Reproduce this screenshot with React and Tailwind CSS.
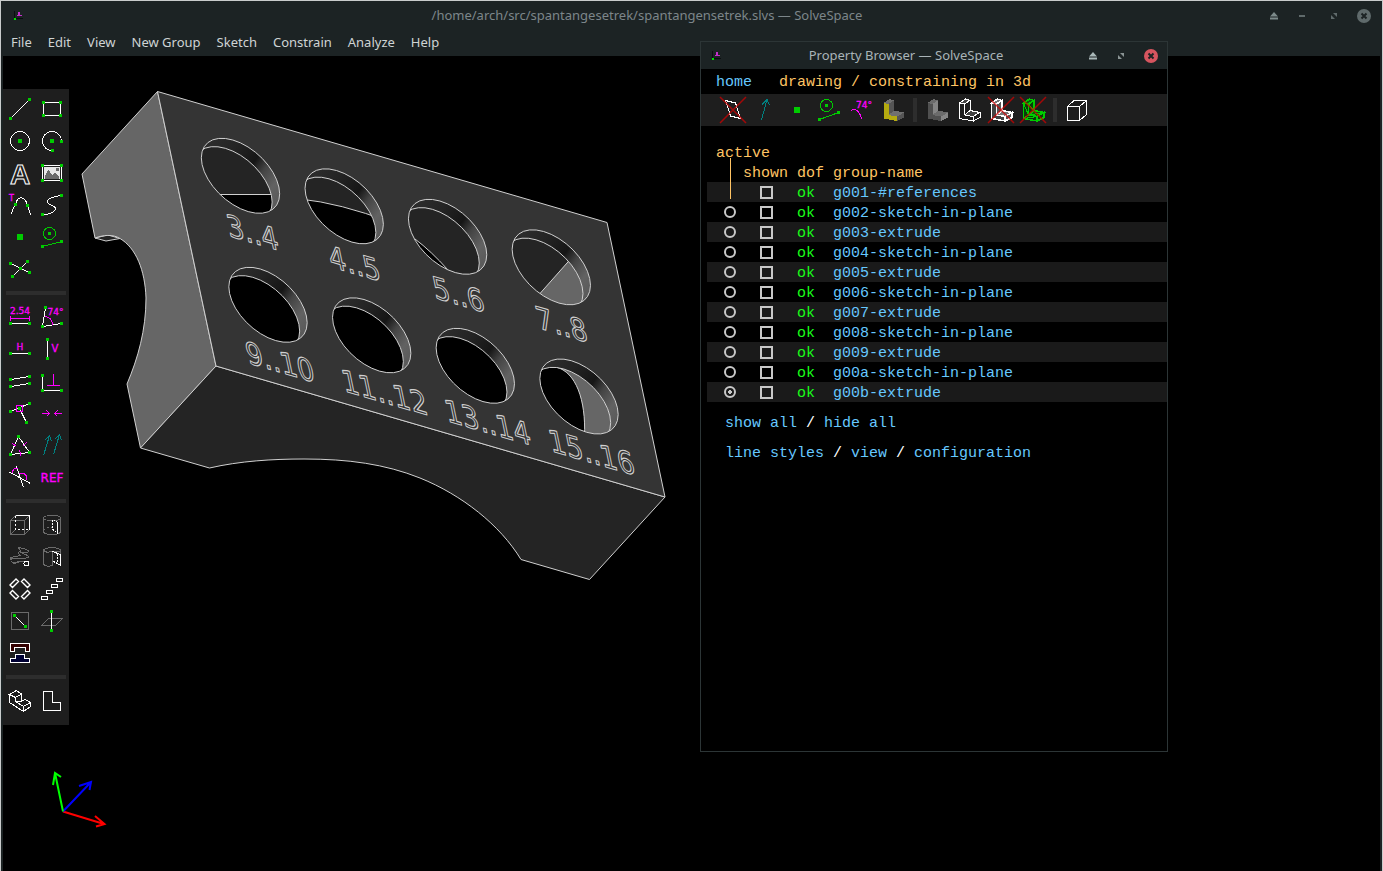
import { useState } from 'react';

const W = '#ffffff';
const G = '#00cc00';
const M = '#ff00ff';
const T = '#008080';
const D = '#6b6b6b';

const LABEL_FONT = '"DejaVu Sans", sans-serif';

function Icon({ children }) {
    return (
        <svg width="24" height="24" viewBox="0 0 24 24" fill="none" stroke={W} shapeRendering="crispEdges" className="block overflow-visible" aria-hidden="true">
            {children}
        </svg>
    );
}

// Green handles at the given points
function Dots({ at, r = 1.5 }) {
    return at.map(([x, y]) => (
        <rect key={`${x}-${y}`} x={x - r} y={y - r} width={r * 2} height={r * 2} fill={G} stroke="none" />
    ));
}

function Label({ x, y, size, children }) {
    return (
        <text x={x} y={y} fontSize={size} textAnchor="middle" fill={M} stroke={M} strokeWidth="0.3" fontFamily={LABEL_FONT}>
            {children}
        </text>
    );
}

function BracketSolid({ front, side, top, stroke, width = 1 }) {
    return (
        <g stroke={stroke || 'none'} strokeWidth={width}>
            <path d="M2.5 5L8.5 1L13 2.5L7.5 6Z" fill={top} />
            <path d="M7.5 6L13 2.5V13L7.5 17Z" fill={side} />
            <path d="M7.5 17L13 12.5L23 14.5L16 18.5Z" fill={top} />
            <path d="M2.5 5L7.5 6V17L16 18.5V23L2.5 20.5Z" fill={front} />
            <path d="M16 18.5L23 14.5V19.5L16 23Z" fill={side} />
        </g>
    );
}

function RedCross() {
    return <path d="M-1 -1L25 25M25 -1L-1 25" stroke="#d00000" strokeOpacity="0.75" strokeWidth="1.5" shapeRendering="auto" />;
}

const sketchTools = [
    ['Line segment', <><path d="M2.5 21.5L21.5 2.5" /><Dots at={[[2.5, 21.5], [21.5, 2.5]]} /></>],
    ['Rectangle', <><path d="M3.5 5.5H20.5V18.5H3.5Z" /><Dots at={[[3.5, 5.5], [20.5, 5.5], [3.5, 18.5], [20.5, 18.5]]} /></>],
    ['Circle', <><circle cx="12" cy="12" r="9.5" /><Dots at={[[12, 12]]} r={2} /></>],
    ['Arc', <><path d="M21.5 12A9.5 9.5 0 1 0 12.5 21.5" /><Dots at={[[12, 12]]} r={2} /><Dots at={[[21.5, 12.5], [12.5, 21.5]]} /></>],
    ['Text', <text x="12" y="22.5" fontSize="28" textAnchor="middle" fontFamily='"Liberation Sans", sans-serif' fontWeight="bold">A</text>],
    ['Image', <>
        <path d="M2.5 4.5H21.5V19.5H2.5Z" />
        <path d="M4 6H20V18H4Z" fill="#e8e8e8" stroke="none" />
        <path d="M5 17.5V15L8.5 8.5L12 14L15 11L19 15.5V17.5Z" fill={D} stroke="none" />
        <path d="M16 7H19V10H16Z" fill={D} stroke="none" />
        <Dots at={[[2.5, 4.5], [21.5, 4.5], [2.5, 19.5], [21.5, 19.5]]} />
    </>],
    ['Tangent arc', <><path d="M3.5 21C5 16 6 13 7.5 11C10 2.5 17 2.5 19.5 12.5C21 16 22 19 22.5 22.5" /><Dots at={[[7.5, 11.5], [19.5, 12.5]]} /><Label x={3.5} y={8} size={8}>T</Label></>],
    ['Bezier spline', <><path d="M21.5 2.5C14 3 6.5 6 7.5 9.5C9 12.5 15 12 15.5 15.5C15.5 18.5 10 21.5 2.5 21.5" /><Dots at={[[21.5, 2.5], [2.5, 21.5]]} /></>],
    ['Point', <Dots at={[[12, 12]]} r={3} />],
    ['Construction', <><circle cx="9.5" cy="8.5" r="6" stroke={G} /><path d="M2.5 21.5L21.5 16.5" stroke={G} /><Dots at={[[9.5, 8.5], [2.5, 21.5], [21.5, 16.5]]} /></>],
    ['Split curves', <><path d="M2.5 6.5L21.5 15.5M19.5 4.5L4.5 19.5" /><Dots at={[[2.5, 6.5], [21.5, 15.5], [19.5, 4.5], [4.5, 19.5], [12.5, 11.5]]} /></>],
];

const constraintTools = [
    ['Distance', <><Label x={12} y={9} size={9}>2.54</Label><path d="M2.5 13.5H21.5M2.5 11V16M21.5 11V16" stroke={M} /><path d="M2.5 18.5H21.5" /><Dots at={[[2.5, 18.5], [21.5, 18.5]]} /></>],
    ['Angle', <><path d="M5.5 2.5L2.5 21.5L21.5 18.5" /><path d="M4.5 11.5C9 11.5 12.5 14.5 12.5 19.5" stroke={M} /><Dots at={[[5.5, 2.5], [2.5, 21.5], [21.5, 18.5]]} /><Label x={15.5} y={9.5} size={9}>74°</Label></>],
    ['Horizontal', <><Label x={12} y={13} size={9}>H</Label><path d="M2.5 16.5H21.5" /><Dots at={[[2.5, 16.5], [21.5, 16.5]]} /></>],
    ['Vertical', <><path d="M7.5 2.5V21.5" /><Dots at={[[7.5, 2.5], [7.5, 21.5]]} /><Label x={15} y={15} size={10}>V</Label></>],
    ['Parallel', <><path d="M2.5 10.5L21.5 7.5M2.5 17.5L21.5 14.5" /><Dots at={[[2.5, 10.5], [21.5, 7.5], [2.5, 17.5], [21.5, 14.5]]} /></>],
    ['Perpendicular', <><path d="M2.5 6.5V21.5H21.5" /><Dots at={[[2.5, 6.5], [2.5, 21.5], [21.5, 21.5]]} /><path d="M13.5 5V16.5M7 16.5H20" stroke={M} /></>],
    ['Point on curve', <><path d="M2.5 10.5L21.5 2.5M11.5 7.5L18.5 21.5" /><Dots at={[[2.5, 10.5], [21.5, 2.5], [18.5, 21.5], [11.5, 7.5]]} /><path d="M8.5 4.5H14.5V10.5H8.5Z" stroke={M} /></>],
    ['Symmetric', <path d="M2 12.5H10M6.5 9.5L9.5 12.5L6.5 15.5M22 12.5H14M17.5 9.5L14.5 12.5L17.5 15.5" stroke={M} />],
    ['Equal', <><path d="M10.5 3.5L2.5 21.5L21.5 19.5Z" /><path d="M4.5 10.5L8.5 13.5M14.5 13.5L18.5 9.5M11.5 17.5L13 22.5" stroke={M} /><Dots at={[[10.5, 3.5], [2.5, 21.5], [21.5, 19.5]]} /></>],
    ['Same orientation', <path d="M3.5 22.5L9.5 2.5M4.5 7.5L9.5 2.5L11.5 8.5M13.5 21.5L19.5 1.5M14.5 6.5L19.5 1.5L21.5 7.5" stroke={T} />],
    ['Other angle', <><path d="M1.5 7L22.5 18.5M8.5 1.5L15.5 22.5" /><path d="M4.5 8C4 5 7 2.5 9.5 4M11.5 9C15 6.5 20 10 18.5 15.5" stroke={M} /></>],
    ['Reference', <Label x={12} y={17} size={12}>REF</Label>],
];

const groupTools = [
    ['Extrude', <>
        <path d="M2.5 7.5H16.5V21.5H2.5ZM2.5 7.5L7.5 2.5M2.5 21.5L7.5 16.5M16.5 7.5L21.5 2.5M16.5 21.5L21.5 16.5" stroke={D} />
        <path d="M7.5 2.5H21.5V16.5" />
        <path d="M7.5 2.5V16.5H21.5" strokeDasharray="2 2" />
    </>],
    ['Lathe', <>
        <ellipse cx="12" cy="5" rx="8.5" ry="2.5" stroke={D} />
        <path d="M3.5 5V19C6 22.5 18 22.5 20.5 19V5" stroke={D} />
        <path d="M3.5 17C6 14.5 9 14.5 12 14.5" stroke={D} strokeDasharray="2 2" />
        <path d="M12.5 14.5V6.5L17.5 8.5M12.5 16L17.5 20.5" strokeDasharray="2 1" />
        <path d="M17.5 8.5V20.5" />
    </>],
    ['Helical', <>
        <path d="M10.5 2.5C14 3 19 4.5 20.5 6C20.500 8 16 8 12.5 7.500C16 9 20 10 21 12C19 14.5 8 12.5 4 13.5C1.5 15.5 3.5 18 7 17.5C11 16 14 15.5 17 16.5" stroke={D} />
        <path d="M10.5 2.5L12.500 6L10 8L12 10.500L2.5 12.5V15M5 18.5L11 17.500" stroke={D} />
        <circle cx="18.5" cy="18.5" r="2.5" />
    </>],
    ['Revolve', <>
        <path d="M3.5 5C6 2 18 2 20.5 5C22 7 15 7 12.5 6.5C8 7.5 4 7 3.5 5V19C5 21.5 9 21.5 12.5 20.5V7M20.5 5V9" stroke={D} />
        <path d="M12.5 6.5L20.5 9.5V20.5L17.5 18.5" />
        <path d="M17.5 9V18.5L12.5 16" strokeDasharray="2 1" />
    </>],
    ['Step rotating', <>
        <path d="M2 8L8 2L10.5 4.5L4.5 10.5ZM22 8L16 2L13.5 4.5L19.5 10.5ZM2 16L8 22L10.5 19.5L4.5 13.5ZM22 16L16 22L13.5 19.5L19.5 13.5Z" strokeWidth="1.4" shapeRendering="auto" />
    </>],
    ['Step translating', <path d="M16.5 1.5H22.5V4.5H16.5ZM11.5 7.5H17.5V10.5H11.5ZM6.5 13.5H12.5V16.5H6.5ZM1.5 19.5H7.5V22.5H1.5Z" />],
    ['Sketch in workplane', <><path d="M3.5 3.5H20.5V20.5H3.5Z" stroke={D} /><path d="M6.5 6.5L17.5 17.5" /><Dots at={[[6.5, 6.5], [17.5, 17.5]]} /></>],
    ['Sketch in 3d', <><path d="M1.5 16.5L8.5 9.5H22.5L15.5 16.5Z" stroke={D} /><path d="M11.5 2.5V21.5" /><Dots at={[[11.5, 2.5], [11.5, 21.5]]} /></>],
    ['Link assembly', <>
        <path d="M2.5 2.5H21.5V10.5H17.5V6.5H6.5V10.5H2.5Z" fill="#330000" />
        <path d="M7.5 13.5H16.5V17.5H21.5V21.5H2.5V17.5H7.5Z" fill="#000033" />
    </>],
];

const viewTools = [
    ['Nearest isometric', <>
        <path d="M1.5 5.5L8.5 1.5L13.5 5L7.5 8.5ZM1.5 5.5V13.5L15.5 22.5L22.5 17.5V13.5L17.5 10.5L13.5 12V5M7.5 8.5V12.5L15.5 17.5L22.5 13.5M15.5 17.5V22.5M7.5 12.5L13.5 12" />
    </>],
    ['Nearest orthographic', <path d="M3.5 2.5H12.5V13.5H20.5V21.5H3.5Z" />],
];

const showTools = [
    ['Workplanes', <><path d="M4.5 2.5L14.5 5L19.5 20.5L9.5 18Z" /><RedCross /></>],
    ['Normals', <path d="M8.5 22L14 1.5M9 6.5L14 1.5L16.5 7.5" stroke={T} />],
    ['Points', <Dots at={[[12, 12]]} r={3} />],
    ['Construction entities', <><circle cx="9.5" cy="7.5" r="6" stroke={G} /><path d="M2.5 21.5L21.5 14.5" stroke={G} /><Dots at={[[9.5, 7.5], [2.5, 21.5], [21.5, 14.5]]} /></>],
    ['Constraints', <><Label x={15} y={10} size={9}>74°</Label><path d="M2.5 12.5C5 10.5 8 12 9.5 14C11.5 17 12.5 19 12.5 21" stroke={M} /></>],
    ['Faces', <BracketSolid front="#b5ab10" side="#555555" top="#707070" />],
    null,
    ['Shaded solid', <BracketSolid front="#505050" side="#858585" top="#6b6b6b" />],
    ['Edges', <BracketSolid front="#1e1e1e" side="#1e1e1e" top="#444444" stroke={W} />],
    ['Outlines', <><BracketSolid front="#444444" side="#555555" top="#777777" stroke={W} width={1.5} /><RedCross /></>],
    ['Mesh', <>
        <BracketSolid front="#0a3a0a" side="#0a3a0a" top="#0a5a0a" stroke={G} width={1.5} />
        <path d="M2.5 5L7.5 17L2.5 20.5M7.5 6L13 13M7.5 17L23 14.5M16 18.5L2.5 20.5" stroke={G} />
        <RedCross />
    </>],
    null,
    ['Occluded lines', <path d="M2.5 8.5H14.5V22.5H2.5ZM2.5 8.5L9 2.5H21.5V16.5L14.5 22.5M14.5 8.5L21.5 2.5" />],
];

function ToolGrid({ tools }) {
    return (
        <div className="grid grid-cols-2 px-px">
            {tools.map(([name, art]) => (
                <button key={name} type="button" aria-label={name} className="p-1 hover:bg-white/10">
                    <Icon>{art}</Icon>
                </button>
            ))}
        </div>
    );
}

function Toolbar() {
    return (
        <aside className="relative mt-[33px] w-[66px] bg-[#1e1e1e] pt-1 pb-2">
            <ToolGrid tools={sketchTools} />
            <hr className="mx-[3px] my-1.5 h-1 border-0 bg-[#2d2d2d]" />
            <ToolGrid tools={constraintTools} />
            <hr className="mx-[3px] my-1.5 h-1 border-0 bg-[#2d2d2d]" />
            <ToolGrid tools={groupTools} />
            <hr className="mx-[3px] my-1.5 h-1 border-0 bg-[#2d2d2d]" />
            <ToolGrid tools={viewTools} />
        </aside>
    );
}

const BOTTOM = '#242424';
const LEFT = '#666666';
const EDGE = '#d0d0d0';

// Holes through the slanted face: centre, background and what is seen through them
const holes = [
    { x: 240.5, y: 175.8, fill: BOTTOM, art: <path d="M190 194.5H290V230H190Z" fill="#000" stroke={EDGE} /> },
    { x: 344.2, y: 206.3, fill: BOTTOM, art: <path d="M300 199Q340 203 390 222V260H300Z" fill="#000" stroke={EDGE} /> },
    { x: 447.6, y: 236.8, fill: BOTTOM, art: <path d="M415 239Q431 251 448 270L440 275L410 250Z" fill="#000" stroke={EDGE} /> },
    { x: 551.3, y: 267.3, fill: BOTTOM, art: <path d="M575 254L536 298L600 320V250Z" fill={LEFT} stroke={EDGE} /> },
    { x: 268, y: 304.8, fill: '#000' },
    { x: 371.7, y: 335.3, fill: '#000' },
    { x: 475.3, y: 365.8, fill: '#000' },
    { x: 579, y: 396.5, fill: '#000', art: <path d="M556 367C576 372 586 400 584.5 436H640V360Z" fill={LEFT} stroke={EDGE} /> },
];

const sizes = [
    [229, 236, '3..4'],
    [331, 267, '4..5'],
    [435, 298, '5..6'],
    [538, 328, '7..8'],
    [248, 363, '9..10'],
    [344, 391, '11..12'],
    [447, 421, '13..14'],
    [551, 451, '15..16'],
];

function Model() {
    return (
        <g stroke={EDGE} strokeLinejoin="round">
            <defs>
                <linearGradient id="wall" gradientUnits="userSpaceOnUse" x1="-36" y1="-24" x2="36" y2="28">
                    <stop offset="0" stopColor="#2c2c2c" />
                    <stop offset="0.25" stopColor="#242424" />
                    <stop offset="0.52" stopColor="#161616" />
                    <stop offset="0.66" stopColor="#444444" />
                    <stop offset="0.85" stopColor="#626262" />
                    <stop offset="1" stopColor="#5a5a5a" />
                </linearGradient>
                <clipPath id="rim">
                    <circle r="1" transform="matrix(38.4 11.2 7.7 35.8 0 0)" />
                </clipPath>
                <clipPath id="far">
                    <circle r="1" transform="matrix(38.4 11.2 7.7 35.8 -7.5 8.3)" />
                </clipPath>
            </defs>

            <path d="M95 238L106 241L120 238.5L108 235Z" fill={BOTTOM} />
            <path d="M157.5 91.5L82 174L95 238C103 235 113 234 120 238.5C136 248 145 270 146 298C146 330 138 358 127 384L140.5 448L216 366Z" fill={LEFT} />
            <path d="M216 366L665 497L589.5 579.5L521 559.5C500 525 462 495 420 478C385 464 348 459 304 459C272 459 240 461 209.5 468L140.5 448Z" fill={BOTTOM} />
            <path d="M157.5 91.5L607 222.5L665 497L216 366Z" fill="#343434" />

            {holes.map((h) => (
                <g key={`${h.x}`} transform={`translate(${h.x} ${h.y})`}>
                    <g clipPath="url(#rim)">
                        <path d="M-45 -45H45V45H-45Z" fill="url(#wall)" stroke="none" />
                        <g clipPath="url(#far)">
                            <path d="M-60 -60H60V60H-60Z" fill={h.fill} stroke="none" />
                            <g transform={`translate(${-h.x} ${-h.y})`}>{h.art}</g>
                        </g>
                        <circle r="1" transform="matrix(38.4 11.2 7.7 35.8 -7.5 8.3)" fill="none" vectorEffect="non-scaling-stroke" />
                    </g>
                    <circle r="1" transform="matrix(38.4 11.2 7.7 35.8 0 0)" fill="none" vectorEffect="non-scaling-stroke" />
                </g>
            ))}

            {sizes.map(([x, y, label]) => (
                <text key={label} transform={`translate(${x} ${y}) rotate(16.2) skewX(28)`} fontSize="28" fontFamily={LABEL_FONT} fill="none">
                    {label}
                </text>
            ))}
        </g>
    );
}

function Axes() {
    return (
        <g fill="none" strokeWidth="2">
            <path d="M63 811.5L104 824M95 816L104.5 824L96 826.5" stroke="#ff0000" />
            <path d="M63 811.5L91 782M79 786L91 782L89.5 790" stroke="#0000ff" />
            <path d="M63 811.5L55 773M53 785L55 773L61 777" stroke="#00ff00" />
        </g>
    );
}

function AppIcon() {
    return (
        <svg width="12" height="12" viewBox="0 0 12 12" shapeRendering="crispEdges" className="block" aria-hidden="true">
            <path d="M1 1H2V8H10V9H1Z" fill="#0a0f10" />
            <path d="M5 2H7V5H9V6H4V5H5Z" fill="#c030c8" />
            <path d="M1 8H3V10H1Z" fill="#00e000" />
        </svg>
    );
}

function Shade({ color }) {
    return (
        <button type="button" aria-label="Shade" className="flex w-7 justify-center">
            <svg width="8" height="8" viewBox="0 0 8 8" fill={color}><path d="M4 0L8 4.5H0ZM0 5.5H8V7.5H0Z" /></svg>
        </button>
    );
}

function Restore({ color }) {
    return (
        <button type="button" aria-label="Restore" className="flex w-7 justify-center">
            <svg width="6" height="6" viewBox="0 0 6 6" fill={color}><path d="M2 0H6V4ZM0 2L4 6H0Z" /></svg>
        </button>
    );
}

function Close({ color }) {
    return (
        <button type="button" aria-label="Close" className="flex w-8 justify-center">
            <svg width="14" height="14" viewBox="0 0 14 14">
                <circle cx="7" cy="7" r="7" fill={color} />
                <path d="M4.5 4.5L9.5 9.5M9.5 4.5L4.5 9.5" stroke="#1c2324" strokeWidth="2" />
            </svg>
        </button>
    );
}

const groups = [
    'g001-#references',
    'g002-sketch-in-plane',
    'g003-extrude',
    'g004-sketch-in-plane',
    'g005-extrude',
    'g006-sketch-in-plane',
    'g007-extrude',
    'g008-sketch-in-plane',
    'g009-extrude',
    'g00a-sketch-in-plane',
    'g00b-extrude',
];

function GroupTable() {
    const [active, setActive] = useState('g00b-extrude');
    const [shown, setShown] = useState([]);

    const toggle = (g) => setShown(shown.includes(g) ? shown.filter(s => s !== g) : [...shown, g]);

    return (
        <div className="relative mt-4 pl-1.5">
            <table className="w-full table-fixed border-collapse text-left leading-4">
                <colgroup>
                    <col className="w-9" />
                    <col className="w-[54px]" />
                    <col className="w-9" />
                    <col />
                </colgroup>
                <thead className="text-[#ffc464]">
                    <tr className="h-5">
                        <th colSpan={4} className="p-0 pt-1 pl-[9px] font-normal">active</th>
                    </tr>
                    <tr className="h-5">
                        <td className="p-0"></td>
                        <th className="p-0 pt-1 font-normal">shown</th>
                        <th className="p-0 pt-1 font-normal">dof</th>
                        <th className="p-0 pt-1 font-normal">group-name</th>
                    </tr>
                </thead>
                <tbody>
                    {groups.map((g, i) => (
                        <tr key={g} className="h-5 odd:bg-[#1a1a1a]">
                            <td className="p-0">
                                {i > 0 && (
                                    <input
                                        type="radio"
                                        name="active"
                                        aria-label={`Activate ${g}`}
                                        checked={active === g}
                                        onChange={() => setActive(g)}
                                        className="ml-[17px] block size-3 appearance-none rounded-full border-2 border-[#c8c8c8] checked:bg-[radial-gradient(#c8c8c8_0_2px,transparent_2px)]"
                                    />
                                )}
                            </td>
                            <td className="p-0">
                                <input
                                    type="checkbox"
                                    aria-label={`Show ${g}`}
                                    checked={shown.includes(g)}
                                    onChange={() => toggle(g)}
                                    className="ml-[17px] block size-[13px] appearance-none border-2 border-[#c8c8c8] checked:bg-[#c8c8c8]"
                                />
                            </td>
                            <td className="p-0 pt-1 text-[#19ff19]">ok</td>
                            <td className="p-0 pt-1"><a href="#" className="text-[#66c8ff]">{g}</a></td>
                        </tr>
                    ))}
                </tbody>
            </table>
            <div className="absolute top-4 left-[29px] h-[41px] w-px bg-[#ffc464]" />
        </div>
    );
}

function PropertyBrowser() {
    return (
        <section className="absolute top-10 left-[699px] flex h-[711px] w-[468px] flex-col border border-[#2c3536] bg-black text-[15px]" style={{ fontFamily: '"Liberation Mono", monospace' }}>
            <header className="flex h-[27px] items-center bg-[#1c2324] font-['Noto_Sans',sans-serif] text-[13px]">
                <div className="w-8 pl-2.5"><AppIcon /></div>
                <h2 className="flex-1 text-center text-[#a9b4b8]">Property Browser — SolveSpace</h2>
                <Shade color="#a9b8b8" />
                <Restore color="#8a9494" />
                <Close color="#d6555f" />
            </header>
            <nav className="flex h-[25px] items-center gap-[27px] pt-1 pl-[15px]">
                <a href="#" className="text-[#66c8ff]">home</a>
                <span className="text-[#ffc464]">drawing / constraining in 3d</span>
            </nav>
            <div className="flex h-8 items-center bg-[#1e1e1e] pl-4">
                {showTools.map((tool, i) => tool ? (
                    <button key={tool[0]} type="button" aria-label={tool[0]} className="p-1 hover:bg-white/10">
                        <Icon>{tool[1]}</Icon>
                    </button>
                ) : (
                    <div key={i} className="mx-1 h-6 w-1 bg-[#2d2d2d]" />
                ))}
            </div>
            <GroupTable />
            <div className="mt-3 space-y-2.5 pl-6 leading-5 text-white">
                <p><a href="#" className="text-[#66c8ff]">show all</a> / <a href="#" className="text-[#66c8ff]">hide all</a></p>
                <p>
                    <a href="#" className="text-[#66c8ff]">line styles</a> / <a href="#" className="text-[#66c8ff]">view</a> / <a href="#" className="text-[#66c8ff]">configuration</a>
                </p>
            </div>
        </section>
    );
}

const menus = ['File', 'Edit', 'View', 'New Group', 'Sketch', 'Constrain', 'Analyze', 'Help'];

export default function App() {
    return (
        <div className="relative flex min-h-screen flex-col border-t border-r border-l border-[#c9cccc] bg-[#1c2324] font-['Noto_Sans',sans-serif]">
            <header>
                <div className="flex h-[29px] items-center pr-0.5 text-[13px]">
                    <div className="w-[33px] pl-3"><AppIcon /></div>
                    <h1 className="flex-1 text-center text-[#7c868a]">/home/arch/src/spantangesetrek/spantangensetrek.slvs — SolveSpace</h1>
                    <Shade color="#7c8a8a" />
                    <button type="button" aria-label="Minimize" className="mr-1 flex w-7 justify-center">
                        <span className="h-0.5 w-1.5 bg-[#5f6a6b]" />
                    </button>
                    <Restore color="#5f6a6b" />
                    <Close color="#5f6a6b" />
                </div>
                <nav className="flex h-[26px] items-center gap-4 pl-2.5 text-[13px] text-[#cfd4d4]">
                    {menus.map(m => (
                        <button key={m} type="button">{m}</button>
                    ))}
                </nav>
            </header>

            <main className="relative mr-0.5 ml-0.5 flex-1 bg-black">
                <svg className="absolute inset-0 h-full w-full" role="img" aria-label="Model view">
                    <g transform="translate(-3 -56)">
                        <Model />
                        <Axes />
                    </g>
                </svg>
                <Toolbar />
            </main>

            <PropertyBrowser />
        </div>
    );
}
